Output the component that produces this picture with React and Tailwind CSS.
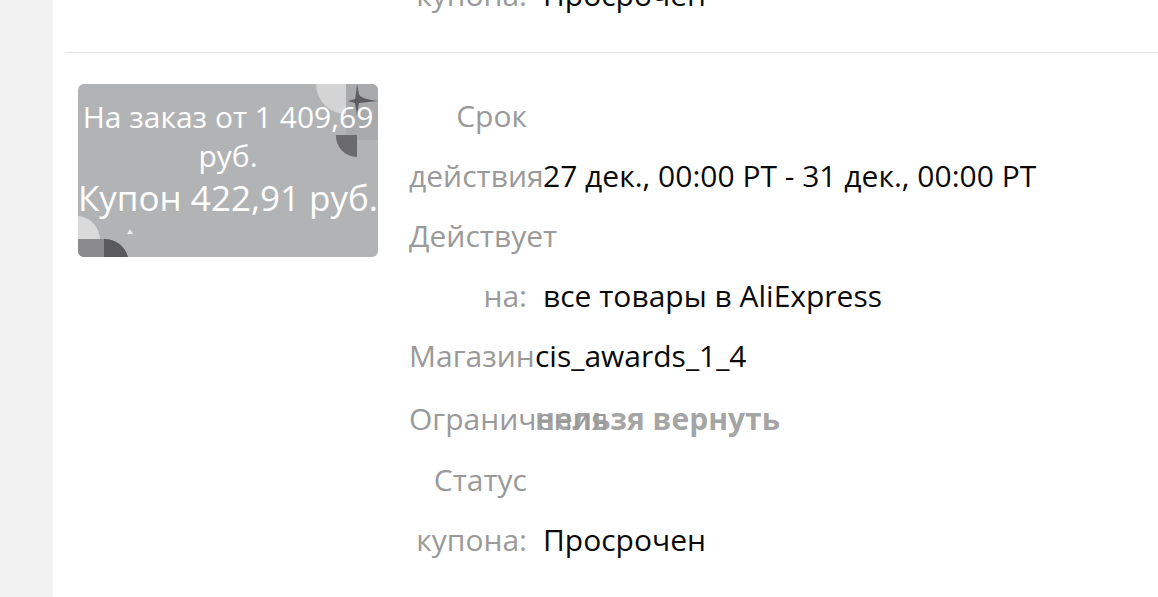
import React from 'react'

const rows = [
  { label: ['Срок', 'действия'], value: '27 дек., 00:00 PT - 31 дек., 00:00 PT' },
  { label: ['Действует', 'на:'], value: 'все товары в AliExpress' },
  { label: ['Магазин'], value: 'cis_awards_1_4', tight: true },
  { label: ['Ограничения'], value: 'нельзя вернуть', tight: true, muted: true, extra: 'mt-[3px]' },
  { label: ['Статус', 'купона:'], value: 'Просрочен', extra: 'mt-[1px]' },
]

const Row = ({ label, value, tight, muted, extra = '' }) => (
  <div className={`flex items-end ${extra}`}>
    <div className="w-[118px] shrink-0 text-right text-[#9a9a9a] whitespace-nowrap">
      {label.map((l) => (
        <div key={l}>{l}</div>
      ))}
    </div>
    <div
      className={`relative whitespace-nowrap ${tight ? 'ml-2' : 'ml-4'} ${
        muted ? 'font-bold text-[#999]/90' : 'text-[#0a0a0a]'
      }`}
    >
      {value}
    </div>
  </div>
)

const Coupon = () => (
  <div className="relative w-[300px] h-[173px] shrink-0 rounded-md bg-[#b2b3b5] overflow-hidden mt-[31px]">
    <svg className="absolute inset-0" width="300" height="173" viewBox="0 0 300 173">
      {/* top right */}
      <path d="M238 0 L268 0 L268 30 A30 30 0 0 1 238 0 Z" fill="#d4d4d5" />
      <path d="M268 0 L300 0 L300 56 L268 56 Z" fill="#a9aaac" />
      <path d="M258 51 L279 51 L279 73 A21 21 0 0 1 258 51 Z" fill="#6b6b6d" />
      <path d="M279 0 L281 10 Q282 15 300 17 L281 19 Q280 24 279 32 Q278 24 277 19 L270 17 L277 15 Q278 10 279 0 Z" fill="#5d5d5f" />
      {/* bottom left */}
      <path d="M0 132 A24 24 0 0 1 22 156 L0 156 Z" fill="#dadadb" />
      <path d="M0 155 L28 155 L28 173 L0 173 Z" fill="#8b8b8d" />
      <path d="M26 155 A24 24 0 0 1 50 173 L26 173 Z" fill="#5a5a5c" />
      <path d="M52 145 L55 150 L49 150 Z" fill="#ededed" />
    </svg>
    <div className="relative flex flex-col items-center text-white text-center pt-[14px] whitespace-nowrap">
      <div className="text-[30px] leading-[38px]">На заказ от 1 409,69</div>
      <div className="text-[30px] leading-[40px]">руб.</div>
      <div className="text-[35px] leading-[44px]">Купон 422,91 руб.</div>
    </div>
  </div>
)

export default function App() {
  return (
    <div
      className="flex h-[597px] w-[1158px] overflow-hidden bg-white text-[30px] leading-[60px]"
      style={{ fontFamily: '"Open Sans", "Noto Sans", sans-serif' }}
    >
      <aside className="w-[53px] shrink-0 bg-[#f2f2f2]" />
      <main className="flex-1 pl-[12px]">
        {/* tail of previous coupon */}
        <div className="-mt-[35px] pb-[27px] border-b border-[#e2e2e2]">
          <div className="flex pl-[344px]">
            <Row label={['купона:']} value="Просрочен" />
          </div>
        </div>

        <div className="flex pl-[13px]">
          <Coupon />
          <div className="ml-[31px] mt-[33px] flex flex-col">
            {rows.map((r) => (
              <Row key={r.value} {...r} />
            ))}
          </div>
        </div>
      </main>
    </div>
  )
}
